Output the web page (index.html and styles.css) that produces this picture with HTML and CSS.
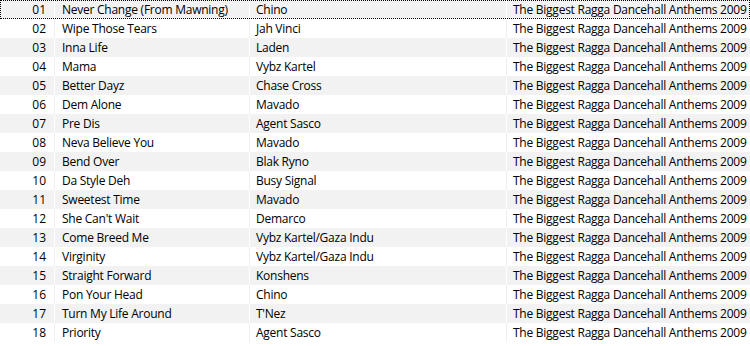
FILE: index.html
```html
<!DOCTYPE html>
<html>
<head>
<meta charset="utf-8">
<link rel="stylesheet" href="styles.css">
</head>
<body>
<div class="list">
  <div class="row odd focus"><span class="c num">01</span><span class="c title">Never Change (From Mawning)</span><span class="c artist">Chino</span><span class="c album">The Biggest Ragga Dancehall Anthems 2009</span></div>
  <div class="row"><span class="c num">02</span><span class="c title">Wipe Those Tears</span><span class="c artist">Jah Vinci</span><span class="c album">The Biggest Ragga Dancehall Anthems 2009</span></div>
  <div class="row odd"><span class="c num">03</span><span class="c title">Inna Life</span><span class="c artist">Laden</span><span class="c album">The Biggest Ragga Dancehall Anthems 2009</span></div>
  <div class="row"><span class="c num">04</span><span class="c title">Mama</span><span class="c artist">Vybz Kartel</span><span class="c album">The Biggest Ragga Dancehall Anthems 2009</span></div>
  <div class="row odd"><span class="c num">05</span><span class="c title">Better Dayz</span><span class="c artist">Chase Cross</span><span class="c album">The Biggest Ragga Dancehall Anthems 2009</span></div>
  <div class="row"><span class="c num">06</span><span class="c title">Dem Alone</span><span class="c artist">Mavado</span><span class="c album">The Biggest Ragga Dancehall Anthems 2009</span></div>
  <div class="row odd"><span class="c num">07</span><span class="c title">Pre Dis</span><span class="c artist">Agent Sasco</span><span class="c album">The Biggest Ragga Dancehall Anthems 2009</span></div>
  <div class="row"><span class="c num">08</span><span class="c title">Neva Believe You</span><span class="c artist">Mavado</span><span class="c album">The Biggest Ragga Dancehall Anthems 2009</span></div>
  <div class="row odd"><span class="c num">09</span><span class="c title">Bend Over</span><span class="c artist">Blak Ryno</span><span class="c album">The Biggest Ragga Dancehall Anthems 2009</span></div>
  <div class="row"><span class="c num">10</span><span class="c title">Da Style Deh</span><span class="c artist">Busy Signal</span><span class="c album">The Biggest Ragga Dancehall Anthems 2009</span></div>
  <div class="row odd"><span class="c num">11</span><span class="c title">Sweetest Time</span><span class="c artist">Mavado</span><span class="c album">The Biggest Ragga Dancehall Anthems 2009</span></div>
  <div class="row"><span class="c num">12</span><span class="c title">She Can't Wait</span><span class="c artist">Demarco</span><span class="c album">The Biggest Ragga Dancehall Anthems 2009</span></div>
  <div class="row odd"><span class="c num">13</span><span class="c title">Come Breed Me</span><span class="c artist">Vybz Kartel/Gaza Indu</span><span class="c album">The Biggest Ragga Dancehall Anthems 2009</span></div>
  <div class="row"><span class="c num">14</span><span class="c title">Virginity</span><span class="c artist">Vybz Kartel/Gaza Indu</span><span class="c album">The Biggest Ragga Dancehall Anthems 2009</span></div>
  <div class="row odd"><span class="c num">15</span><span class="c title">Straight Forward</span><span class="c artist">Konshens</span><span class="c album">The Biggest Ragga Dancehall Anthems 2009</span></div>
  <div class="row"><span class="c num">16</span><span class="c title">Pon Your Head</span><span class="c artist">Chino</span><span class="c album">The Biggest Ragga Dancehall Anthems 2009</span></div>
  <div class="row odd"><span class="c num">17</span><span class="c title">Turn My Life Around</span><span class="c artist">T'Nez</span><span class="c album">The Biggest Ragga Dancehall Anthems 2009</span></div>
  <div class="row"><span class="c num">18</span><span class="c title">Priority</span><span class="c artist">Agent Sasco</span><span class="c album">The Biggest Ragga Dancehall Anthems 2009</span></div>
</div>
</body>
</html>
```
FILE: styles.css
```css
html, body {
  margin: 0;
  padding: 0;
  background: #ffffff;
}
.list {
  width: 750px;
  font-family: "Open Sans", "Noto Sans", sans-serif;
  font-size: 12px;
  letter-spacing: -0.25px;
  color: #000000;
}
.row {
  display: grid;
  grid-template-columns: 55px 195px 257px 243px;
  height: 19px;
  line-height: 19px;
  box-sizing: border-box;
}
.row.odd {
  background: #f2f2f2;
}
.row.focus {
  outline: 1px dotted #000000;
  outline-offset: -1px;
}
.c {
  white-space: nowrap;
  overflow: hidden;
  box-sizing: border-box;
  border-right: 1px solid #efefef;
}
.row.odd .c {
  border-right-color: #ffffff;
}
.num {
  text-align: right;
  padding-right: 8px;
  letter-spacing: 0;
}
.title {
  padding-left: 7px;
}
.artist {
  padding-left: 6px;
}
.album {
  padding-left: 6px;
  border-right: none;
}
```
